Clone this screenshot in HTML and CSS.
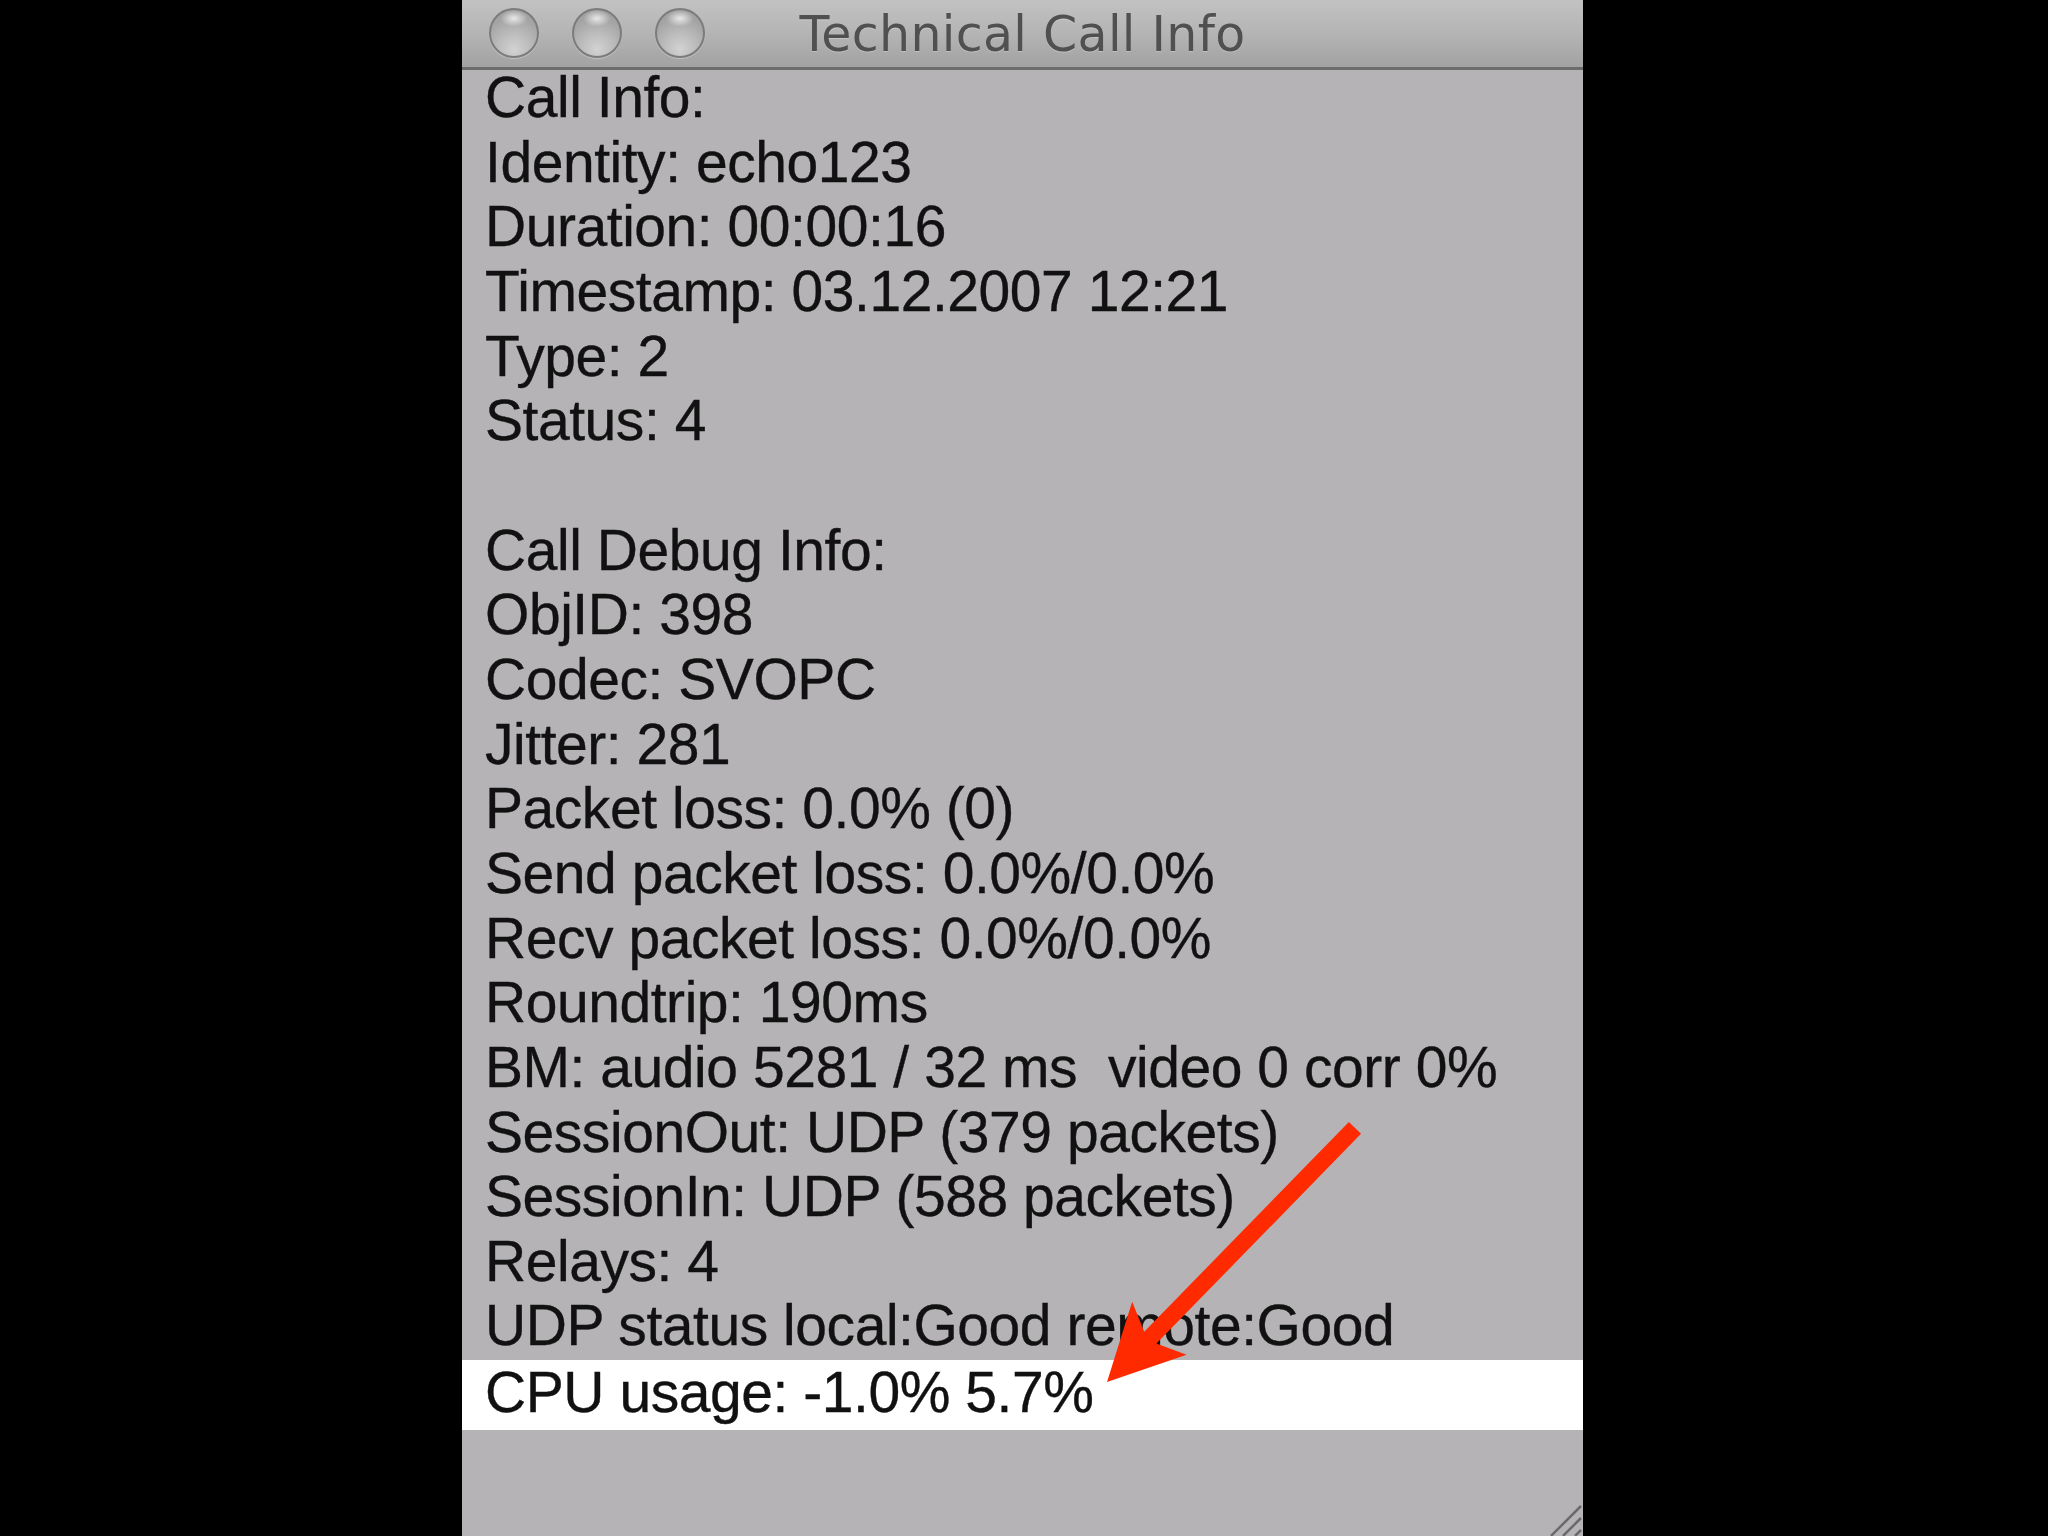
FILE: index.html
```html
<!DOCTYPE html>
<html>
<head>
<meta charset="utf-8">
<title>Technical Call Info</title>
<link rel="stylesheet" href="styles.css">
</head>
<body>
<div class="stage">
  <div class="window">
    <div class="titlebar">
      <div class="lights">
        <span class="light"></span>
        <span class="light"></span>
        <span class="light"></span>
      </div>
      <div class="title">Technical Call Info</div>
      <div class="spacer"></div>
    </div>
    <div class="content">
      <div class="line">Call Info:</div>
      <div class="line">Identity: echo123</div>
      <div class="line">Duration: 00:00:16</div>
      <div class="line">Timestamp: 03.12.2007 12:21</div>
      <div class="line">Type: 2</div>
      <div class="line">Status: 4</div>
      <div class="line">&nbsp;</div>
      <div class="line">Call Debug Info:</div>
      <div class="line">ObjID: 398</div>
      <div class="line">Codec: SVOPC</div>
      <div class="line">Jitter: 281</div>
      <div class="line">Packet loss: 0.0% (0)</div>
      <div class="line">Send packet loss: 0.0%/0.0%</div>
      <div class="line">Recv packet loss: 0.0%/0.0%</div>
      <div class="line">Roundtrip: 190ms</div>
      <div class="line">BM: audio 5281 / 32 ms  video 0 corr 0%</div>
      <div class="line">SessionOut: UDP (379 packets)</div>
      <div class="line">SessionIn: UDP (588 packets)</div>
      <div class="line">Relays: 4</div>
      <div class="line">UDP status local:Good remote:Good</div>
      <div class="line highlight">CPU usage: -1.0% 5.7%</div>
    </div>
    <svg class="grip" width="40" height="40" viewBox="0 0 40 40">
      <line x1="8" y1="40" x2="38" y2="10" stroke="#6a6a6a" stroke-width="2.5"/>
      <line x1="20" y1="40" x2="38" y2="22" stroke="#6a6a6a" stroke-width="2.5"/>
      <line x1="32" y1="40" x2="38" y2="34" stroke="#6a6a6a" stroke-width="2.5"/>
    </svg>
  </div>
  <svg class="arrow" width="2048" height="1536" viewBox="0 0 2048 1536">
    <polygon transform="translate(1107 1382) rotate(-45.7)"
      points="0,0 75,-38 62,-8.5 355,-8.5 355,8.5 62,8.5 75,38"
      fill="#ff2a00"/>
  </svg>
</div>
</body>
</html>
```

FILE: styles.css
```css
html, body {
  margin: 0;
  padding: 0;
  background: #000;
  width: 2048px;
  height: 1536px;
  overflow: hidden;
}

.stage {
  position: relative;
  width: 2048px;
  height: 1536px;
}

.window {
  position: relative;
  margin-left: 462px;
  width: 1121px;
  height: 1536px;
  background: #b5b3b6;
  display: flex;
  flex-direction: column;
  overflow: hidden;
}

.titlebar {
  height: 67px;
  flex: 0 0 auto;
  border-bottom: 3px solid #6c6c6c;
  background: linear-gradient(#c2c2c2, #b4b4b4 50%, #a2a2a2);
  display: grid;
  grid-template-columns: 1fr auto 1fr;
  align-items: center;
}

.lights {
  display: flex;
  gap: 33px;
  padding-left: 27px;
  align-items: center;
  margin-top: -1px;
}

.light {
  width: 50px;
  height: 50px;
  border-radius: 50%;
  box-sizing: border-box;
  border: 2px solid #7c7c7c;
  background:
    radial-gradient(ellipse 30% 18% at 50% 18%, rgba(255,255,255,0.75), rgba(255,255,255,0) 100%),
    radial-gradient(circle at 50% 85%, #d2d2d2 0%, #bcbcbc 35%, #a4a4a4 70%, #9a9a9a 100%);
  box-shadow: 0 1px 1px rgba(255,255,255,0.35);
}

.title {
  font-family: "DejaVu Sans", "Liberation Sans", sans-serif;
  font-size: 49px;
  color: #505050;
  letter-spacing: 0.3px;
  text-shadow: 0 1px 0 rgba(255,255,255,0.25);
  margin-top: 2px;
}

.content {
  margin-top: -5px;
  padding-left: 23px;
  font-family: "Liberation Sans", Arial, sans-serif;
  font-size: 57px;
  line-height: 64.65px;
  letter-spacing: -0.45px;
  color: #111;
  -webkit-text-stroke: 0.35px #111;
}

.line {
  white-space: pre;
}

.highlight {
  background: #fff;
  margin-left: -23px;
  padding-left: 23px;
  margin-top: 2px;
  padding-bottom: 5px;
}

.grip {
  position: absolute;
  right: 0;
  bottom: 0;
}

.arrow {
  position: absolute;
  left: 0;
  top: 0;
  pointer-events: none;
}
```
